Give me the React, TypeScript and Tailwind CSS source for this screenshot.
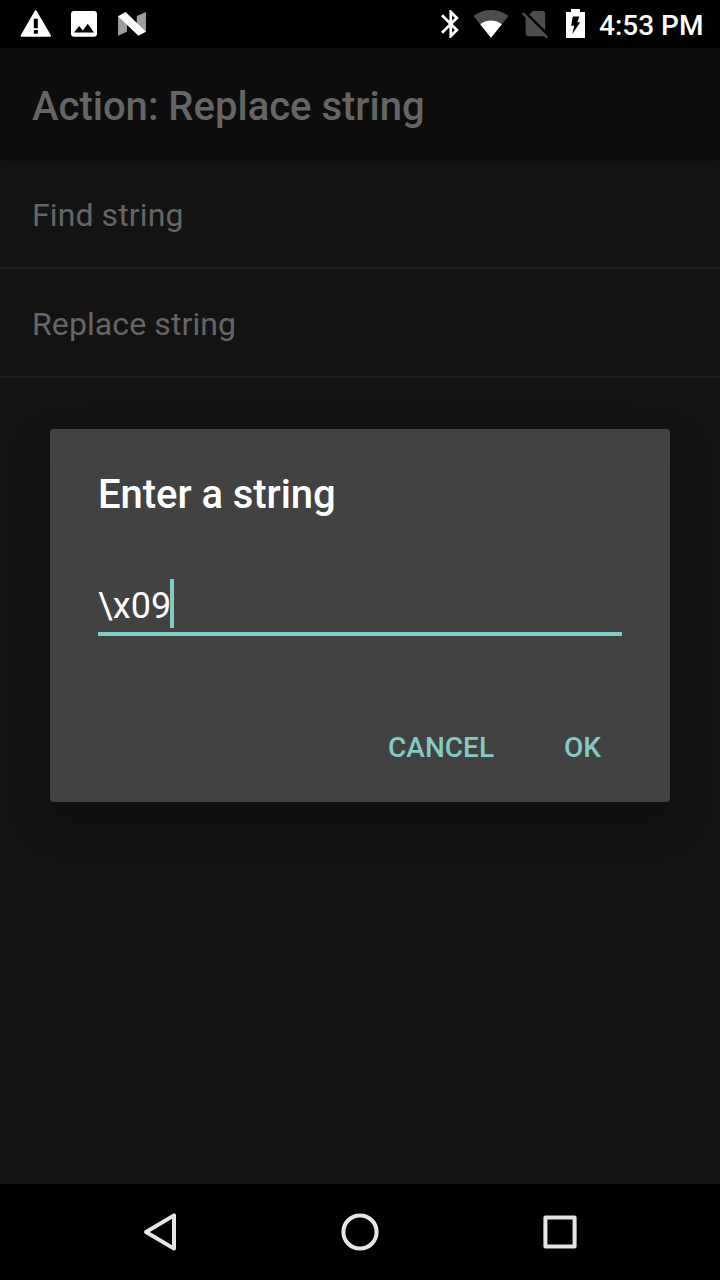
import React from "react";

type IconProps = { viewBox: string; className: string; children: React.ReactNode };

function Icon({ viewBox, className, children }: IconProps) {
  return (
    <svg viewBox={viewBox} className={className} fill="white" aria-hidden="true">
      {children}
    </svg>
  );
}

function StatusBar() {
  return (
    <header className="flex h-12 shrink-0 items-center bg-black pl-3">
      <Icon viewBox="12 0 48 48" className="h-12 w-12">
        <path
          stroke="white"
          strokeWidth="2"
          strokeLinejoin="round"
          d="M35.7 11.2L50 35.8H21.6Z"
        />
        <path fill="black" d="M33.8 18.8h4v9.4h-4zM33.8 30h4v3.8h-4z" />
      </Icon>
      <Icon viewBox="60 0 48 48" className="h-12 w-12">
        <rect x="71" y="11" width="26" height="25.8" rx="3" />
        <path fill="black" d="M74 32.4L79.2 26l3.6 4.4 5-6.6 6.2 8.6z" />
      </Icon>
      <Icon viewBox="108 0 48 48" className="h-12 w-12">
        <path fill="#9c9c9c" d="M118 15.6l9 9v7.2L118 35.8zM136.8 16l9.2-4v20l-9.2-8.5z" />
        <path d="M118 16.2l7.6-4.2L146 31.8l-7.6 3.9z" />
      </Icon>
      <div className="ml-auto flex items-center pr-4">
        <Icon viewBox="430 0 40 48" className="h-12 w-10">
          <path
            transform="translate(434 7.2) scale(1.4)"
            d="M17.71 7.71L12 2h-1v7.59L6.41 5 5 6.41 10.59 12 5 17.59 6.41 19 11 14.41V22h1l5.71-5.71-4.3-4.29 4.3-4.29zM13 5.83l1.88 1.88L13 9.59V5.83zm1.88 10.46L13 18.17v-3.76l1.88 1.88z"
          />
        </Icon>
        <Icon viewBox="470 0 42 48" className="h-12 w-[42px]">
          <g transform="translate(473 5.5) scale(1.5)">
            <path fill="#4d4d4d" d="M12.01 21.49L23.64 7c-.45-.34-4.93-4-11.64-4C5.28 3 .81 6.66.36 7l11.63 14.49.01.01.01-.01z" />
            <path d="M4.79 12.52l7.2 8.98H12l.01-.01 7.2-8.98C18.85 12.24 16.1 10 12 10s-6.85 2.24-7.21 2.52z" />
          </g>
        </Icon>
        <Icon viewBox="512 0 42 48" className="h-12 w-[42px]">
          <path
            fill="#4d4d4d"
            transform="translate(518.6 6.9) scale(1.4)"
            d="M18.99 5c0-1.1-.89-2-1.99-2h-7L7.66 5.34 19 16.68 18.99 5zM3.65 3.88L2.38 5.15 5 7.77V19c0 1.1.9 2 2 2h10.01c.35 0 .67-.1.96-.26l1.88 1.88 1.27-1.27L3.65 3.88z"
          />
        </Icon>
        <Icon viewBox="554 0 45 48" className="h-12 w-[45px]">
          <path d="M571 9h9v3h5v26h-19V12h5z" />
          <path fill="black" d="M572.8 16.4h6.6l-2 5.8h2.8l-8 12 2-8.4h-3z" />
        </Icon>
        <span className="w-[105px] whitespace-nowrap pt-[3px] text-[28px] leading-[48px] font-medium text-white">
          4:53 PM
        </span>
      </div>
    </header>
  );
}

function Row({ label }: { label: string }) {
  return (
    <li className="flex h-[109px] items-center border-b-2 border-[#1d1d1d] px-8 pt-[3px] text-[32px] leading-none tracking-[0.1px] text-[#656565]">
      {label}
    </li>
  );
}

function StringDialog() {
  return (
    <div
      role="dialog"
      className="absolute top-[429px] left-[50px] flex h-[373px] w-[620px] flex-col rounded-[4px] bg-[#424242] px-12 shadow-[0_18px_40px_rgba(0,0,0,0.25)]"
    >
      <h2 className="mt-[42px] text-[40px] leading-[48px] font-medium tracking-[-0.05px] text-white">Enter a string</h2>
      <div className="mt-[60px] flex h-[57px] items-start border-b-4 border-[#80cbc4]">
        <span className="w-[72px] pt-[3px] text-[36px] leading-[48px] text-white">\x09</span>
        <span className="h-[49px] w-1 bg-[#80cbc4]" />
      </div>
      <div className="mt-[94px] flex justify-end pr-[21px] text-[28px] leading-9 font-medium text-[#80cbc4]">
        <button className="mr-[70px]">CANCEL</button>
        <button>OK</button>
      </div>
    </div>
  );
}

function NavBar() {
  return (
    <nav className="flex h-24 shrink-0 items-center justify-center gap-[152px] bg-black">
      <svg viewBox="136 1208 48 48" className="size-12" fill="none" stroke="#e6e6e6" strokeWidth="4" strokeLinejoin="round">
        <path d="M146 1232L174 1215.4V1248.6Z" />
      </svg>
      <svg viewBox="336 1208 48 48" className="size-12" fill="none" stroke="#e6e6e6" strokeWidth="4">
        <circle cx="360" cy="1232" r="16.6" />
      </svg>
      <svg viewBox="536 1208 48 48" className="size-12" fill="none" stroke="#e6e6e6" strokeWidth="4" strokeLinejoin="round">
        <rect x="545.4" y="1217.4" width="29.2" height="29.2" />
      </svg>
    </nav>
  );
}

export default function App() {
  return (
    <div className="relative flex h-[1280px] w-[720px] flex-col overflow-hidden bg-[#131313] font-['Roboto',sans-serif]">
      <StatusBar />
      <div className="flex h-28 shrink-0 items-center bg-[#0d0d0d] px-8 pt-[6px] shadow-[0_1px_5px_rgba(0,0,0,0.25)]">
        <h1 className="text-[40px] leading-[48px] font-medium text-[#656565]">Action: Replace string</h1>
      </div>
      <ul className="grow">
        <Row label="Find string" />
        <Row label="Replace string" />
      </ul>
      <NavBar />
      <StringDialog />
    </div>
  );
}
